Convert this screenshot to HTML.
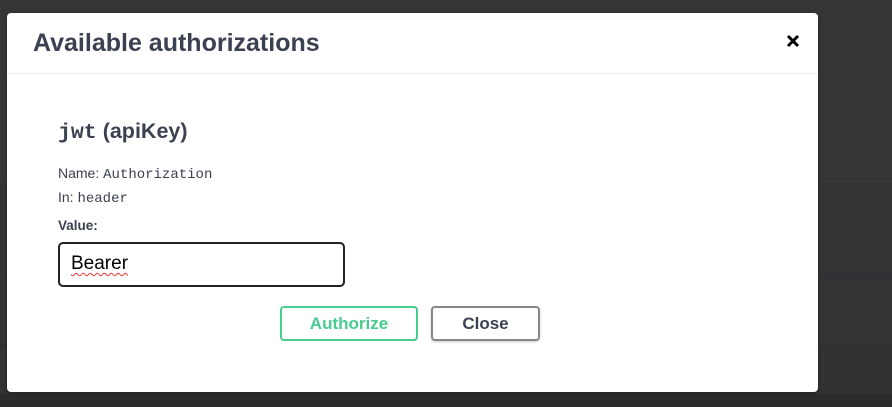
<!DOCTYPE html>
<html><head><style>
html,body{margin:0;padding:0;width:892px;height:406px;overflow:hidden;background:#333;font-family:"Liberation Sans",sans-serif;}
.bg{position:absolute;left:0;width:892px;}
.modal{position:absolute;left:7px;top:13px;width:811px;height:379px;background:#fff;border-radius:4px;box-shadow:0 1px 3px rgba(0,0,0,.4);}
.hdr{height:60px;border-bottom:1px solid #ececec;position:relative;}
.hdr h3{margin:0;position:absolute;left:26px;top:16px;font-size:25px;font-weight:bold;color:#3b4151;}
.x{position:absolute;left:779px;top:21px;}
h4{position:absolute;left:51px;top:106px;margin:0;font-size:21.5px;color:#3b4151;font-weight:bold;}
h4 code{font-family:"Liberation Mono",monospace;font-size:21.5px;}
.p{position:absolute;left:51px;font-size:14px;color:#3b4151;}
.p code{font-family:"Liberation Mono",monospace;font-size:14px;}
.inp{position:absolute;left:51px;top:229px;width:283px;height:41px;border:2px solid #222;border-radius:5px;box-sizing:content-box;}
.inp span{position:absolute;left:11px;top:9px;font-size:19px;color:#000;text-decoration:underline wavy #e33;text-decoration-thickness:1px;text-underline-offset:3px;}
.btn{position:absolute;top:293px;height:31px;border:2px solid;border-radius:4px;font-size:17px;font-weight:bold;text-align:center;line-height:31px;}
</style></head><body>
<div class="bg" style="top:0;height:181px;background:#353535"></div>
<div class="bg" style="top:181px;height:95px;background:#333;border-top:1px solid #3a3a3a"></div>
<div class="bg" style="top:276px;height:49px;background:#313335;border-top:1px solid #283040;border-bottom:1px solid #283040"></div>
<div class="bg" style="top:326px;height:19px;background:#333;border-bottom:1px solid #22302a"></div>
<div class="bg" style="top:346px;height:48px;background:#323232"></div>
<div class="bg" style="top:394px;height:12px;background:#2b2b2b;border-top:1px solid #1f3328"></div>
<div class="modal">
 <div class="hdr"><h3>Available authorizations</h3>
 <svg class="x" width="14" height="14" viewBox="0 0 14 14"><path d="M2 2L12 12M12 2L2 12" stroke="#000" stroke-width="3"/></svg></div>
 <h4><code>jwt</code> (apiKey)</h4>
 <div class="p" style="top:152px">Name: <code>Authorization</code></div>
 <div class="p" style="top:176px">In: <code>header</code></div>
 <div class="p" style="top:205px;font-weight:bold;font-size:13.5px">Value:</div>
 <div class="inp"><span>Bearer</span></div>
 <div class="btn" style="left:273px;width:134px;border-color:#49cc90;color:#49cc90">Authorize</div>
 <div class="btn" style="left:424px;width:105px;border-color:#888;color:#3b4151;box-shadow:0 1px 2px rgba(0,0,0,.2)">Close</div>
</div>
</body></html>
